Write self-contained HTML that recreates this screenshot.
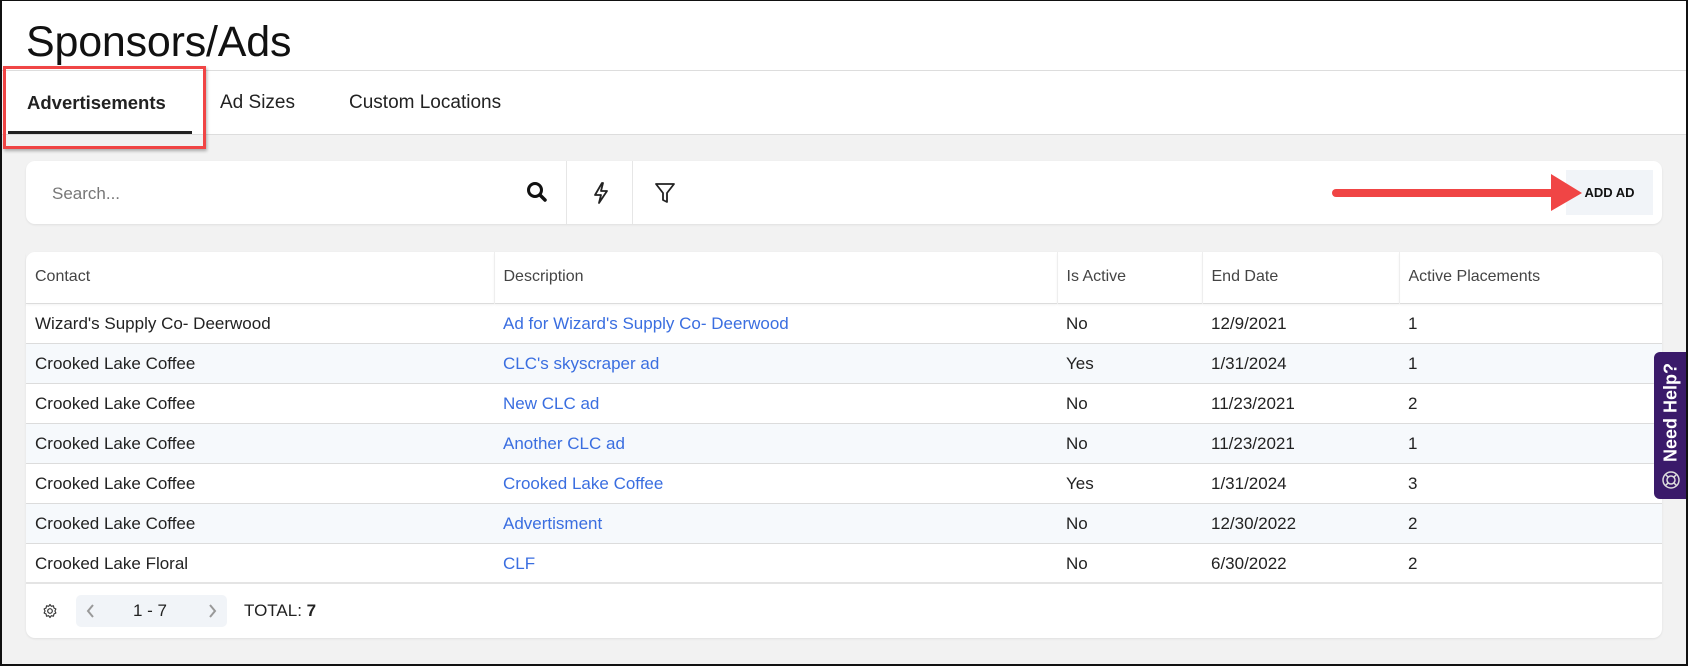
<!DOCTYPE html>
<html><head><meta charset="utf-8"><style>
*{box-sizing:border-box;margin:0;padding:0}
body{width:1688px;height:666px;overflow:hidden;font-family:"Liberation Sans",sans-serif;background:#f2f2f2;position:relative;color:#222}
.frame{position:absolute;inset:0;border:2px solid #111;border-top:1px solid #111;pointer-events:none;z-index:10}
.top{position:absolute;left:0;top:0;width:1688px;height:134px;background:#fff}
h1{position:absolute;left:26px;top:18px;font-weight:400;font-size:43px;letter-spacing:-0.2px;color:#111}
.hl{position:absolute;left:0;top:70px;width:1688px;height:1px;background:#ddd}
.hl2{position:absolute;left:0;top:134px;width:1688px;height:1px;background:#ddd}
.tab{position:absolute;top:92px;font-size:19px;color:#222}
.ul{position:absolute;left:8px;top:131px;width:184px;height:3px;background:#222}
.redbox{position:absolute;left:3px;top:66px;width:203px;height:83px;border:3px solid #f04545;box-shadow:1px 2px 3px rgba(0,0,0,.3)}
.card{position:absolute;background:#fff;border-radius:9px;box-shadow:0 1px 2px rgba(0,0,0,.08)}
.sep{position:absolute;top:0;width:1px;height:63px;background:#e6e6e6}
.btn{position:absolute;left:1566px;top:170px;width:87px;height:45px;background:#f1f4f8;font-weight:700;font-size:13px;line-height:45px;text-align:center;color:#111}
table{border-collapse:collapse;position:absolute;left:26px;top:252px;width:1636px;font-size:17px}
th{font-weight:400;color:#444;text-align:left;height:51px;padding-left:9px;border-left:1px solid #eee;box-shadow:0 2px 2px rgba(0,0,0,.05);font-size:16px}
th:first-child{border-left:none}
td{height:40px;padding-left:9px;border-top:1px solid #dcdcdc;color:#222;padding-top:2px}
tr:nth-child(odd) td{background:#f6f9fc}
tr:first-child td{border-top:2px solid #e4e4e4}
a{color:#3a6ee0;text-decoration:none}
.help{position:absolute;left:1654px;top:352px;width:34px;height:147px;background:#3a1a6a;border-radius:6px 0 0 6px}
</style></head><body>
<div class="top"></div>
<h1>Sponsors/Ads</h1>
<div class="hl"></div><div class="hl2"></div>
<div class="tab" style="left:27px;font-weight:700;font-size:18.5px">Advertisements</div>
<div class="tab" style="left:220px">Ad Sizes</div>
<div class="tab" style="left:349px">Custom Locations</div>
<div class="ul"></div>
<div class="redbox"></div>

<div class="card" style="left:26px;top:161px;width:1636px;height:63px">
 <div style="position:absolute;left:26px;top:23px;font-size:17px;color:#777">Search...</div>
 <svg style="position:absolute;left:500px;top:20px" width="22" height="22" viewBox="0 0 22 22"><circle cx="9" cy="9" r="6.5" fill="none" stroke="#111" stroke-width="3"/><path d="M14 14l5 5" stroke="#111" stroke-width="3.5" stroke-linecap="round"/></svg>
 <div class="sep" style="left:540px"></div>
 <svg style="position:absolute;left:565px;top:20px" width="20" height="24" viewBox="0 0 20 24"><path d="M11 2L4 14h6l-2 8 8-12h-6l2-8z" fill="none" stroke="#222" stroke-width="1.8" stroke-linejoin="round"/></svg>
 <div class="sep" style="left:606px"></div>
 <svg style="position:absolute;left:628px;top:21px" width="22" height="22" viewBox="0 0 22 22"><path d="M2 2h18l-7 9v9l-4-2v-7z" fill="none" stroke="#222" stroke-width="1.8" stroke-linejoin="round"/></svg>
</div>
<div class="btn">ADD AD</div>
<svg style="position:absolute;left:1328px;top:171px" width="260" height="42" viewBox="0 0 260 42"><path d="M8 22H226" stroke="#f04545" stroke-width="8" stroke-linecap="round"/><path d="M223 3L254 22L223 40z" fill="#f04545"/></svg>

<div class="card" style="left:26px;top:252px;width:1636px;height:386px"></div>
<table>
<tr><th style="width:468px">Contact</th><th style="width:563px">Description</th><th style="width:145px">Is Active</th><th style="width:197px">End Date</th><th>Active Placements</th></tr>
<tr><td>Wizard's Supply Co- Deerwood</td><td><a>Ad for Wizard's Supply Co- Deerwood</a></td><td>No</td><td>12/9/2021</td><td>1</td></tr>
<tr><td>Crooked Lake Coffee</td><td><a>CLC's skyscraper ad</a></td><td>Yes</td><td>1/31/2024</td><td>1</td></tr>
<tr><td>Crooked Lake Coffee</td><td><a>New CLC ad</a></td><td>No</td><td>11/23/2021</td><td>2</td></tr>
<tr><td>Crooked Lake Coffee</td><td><a>Another CLC ad</a></td><td>No</td><td>11/23/2021</td><td>1</td></tr>
<tr><td>Crooked Lake Coffee</td><td><a>Crooked Lake Coffee</a></td><td>Yes</td><td>1/31/2024</td><td>3</td></tr>
<tr><td>Crooked Lake Coffee</td><td><a>Advertisment</a></td><td>No</td><td>12/30/2022</td><td>2</td></tr>
<tr><td style="border-bottom:2px solid #e4e4e4">Crooked Lake Floral</td><td style="border-bottom:2px solid #e4e4e4"><a>CLF</a></td><td style="border-bottom:2px solid #e4e4e4">No</td><td style="border-bottom:2px solid #e4e4e4">6/30/2022</td><td style="border-bottom:2px solid #e4e4e4">2</td></tr>
</table>
<svg style="position:absolute;left:42px;top:603px" width="16" height="16" viewBox="0 0 16 16"><circle cx="8" cy="8" r="2.3" fill="none" stroke="#333" stroke-width="1.2"/><path d="M8 1.5l1.3 1.8 2.2-.5.4 2.2 2 1-1 2 1 2-2 1-.4 2.2-2.2-.5L8 14.5l-1.3-1.8-2.2.5-.4-2.2-2-1 1-2-1-2 2-1 .4-2.2 2.2.5z" fill="none" stroke="#333" stroke-width="1.1" stroke-linejoin="round"/></svg>
<div style="position:absolute;left:76px;top:595px;width:151px;height:32px;background:#f1f4f8;border-radius:5px;font-size:17px">
 <svg style="position:absolute;left:10px;top:9px" width="10" height="14" viewBox="0 0 10 14"><path d="M7 1L2 7l5 6" fill="none" stroke="#999" stroke-width="2"/></svg>
 <span style="position:absolute;left:57px;top:6px">1 - 7</span>
 <svg style="position:absolute;left:131px;top:9px" width="10" height="14" viewBox="0 0 10 14"><path d="M3 1l5 6-5 6" fill="none" stroke="#999" stroke-width="2"/></svg>
</div>
<div style="position:absolute;left:244px;top:601px;font-size:17px">TOTAL: <b>7</b></div>
<div class="help">
 <div style="position:absolute;left:-40px;top:50px;width:114px;transform:rotate(-90deg);color:#fff;font-weight:700;font-size:18px;text-align:center">Need Help?</div>
 <svg style="position:absolute;left:7px;top:118px" width="20" height="20" viewBox="0 0 20 20"><circle cx="10" cy="10" r="8" fill="none" stroke="#ddd" stroke-width="1.5"/><circle cx="10" cy="10" r="4" fill="none" stroke="#ddd" stroke-width="1.5"/><path d="M4.5 4.5l2.7 2.7M15.5 4.5l-2.7 2.7M4.5 15.5l2.7-2.7M15.5 15.5l-2.7-2.7" stroke="#ddd" stroke-width="1.5"/></svg>
</div>
<div class="frame"></div>
</body></html>
